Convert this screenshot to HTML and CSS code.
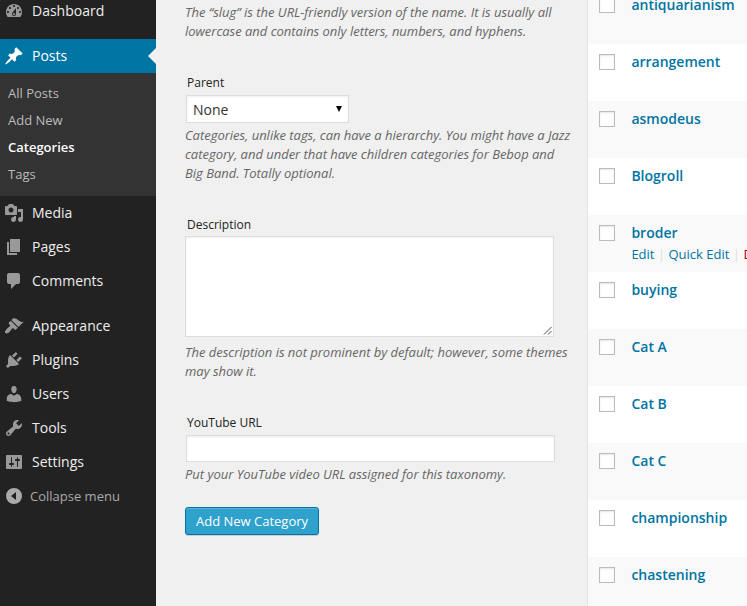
FILE: index.html
```html
<!DOCTYPE html>
<html lang="en">
<head>
<meta charset="utf-8">
<title>Categories</title>
<link rel="stylesheet" href="styles.css">
</head>
<body>
<div class="admin">
  <nav class="sidebar">
    <a class="item"><svg class="icon" viewBox="0 0 20 20"><path d="M3.76 16h12.48c1.1-1.37 1.76-3.11 1.76-5 0-4.42-3.58-8-8-8s-8 3.58-8 8c0 1.89.66 3.63 1.76 5zM10 4c.55 0 1 .45 1 1s-.45 1-1 1-1-.45-1-1 .45-1 1-1zM6 6c.55 0 1 .45 1 1s-.45 1-1 1-1-.45-1-1 .45-1 1-1zm8 0c.55 0 1 .45 1 1s-.45 1-1 1-1-.45-1-1 .45-1 1-1zm-5.37 5.55L12 7v6c0 1.1-.9 2-2 2s-2-.9-2-2c0-.57.24-1.08.63-1.45zM4 10c.55 0 1 .45 1 1s-.45 1-1 1-1-.45-1-1 .45-1 1-1zm12 0c.55 0 1 .45 1 1s-.45 1-1 1-1-.45-1-1 .45-1 1-1zm-5 3c0-.55-.45-1-1-1s-1 .45-1 1 .45 1 1 1 1-.45 1-1z"/></svg><span>Dashboard</span></a>
    <a class="item current"><svg class="icon" viewBox="0 0 20 20"><path d="M10.44 3.02l1.82-1.82 6.36 6.35-1.83 1.82c-1.05-.68-2.48-.57-3.41.36l-.75.75c-.92.93-1.04 2.35-.35 3.41l-1.83 1.82-2.41-2.41-2.8 2.79c-.42.42-3.38 2.71-3.8 2.29s1.86-3.39 2.28-3.81l2.79-2.79L4.1 9.36l1.83-1.82c1.05.69 2.48.57 3.4-.36l.75-.75c.93-.92 1.05-2.35.36-3.41z"/></svg><span>Posts</span></a>
    <div class="submenu">
      <a>All Posts</a>
      <a>Add New</a>
      <a class="active">Categories</a>
      <a>Tags</a>
    </div>
    <a class="item"><svg class="icon" viewBox="0 0 20 20"><path d="M13 11V4c0-.55-.45-1-1-1h-1.67L9 1H5L3.67 3H2c-.55 0-1 .45-1 1v7c0 .55.45 1 1 1h10c.55 0 1-.45 1-1zM7 4.5c1.38 0 2.5 1.12 2.5 2.5S8.38 9.5 7 9.5 4.5 8.38 4.5 7 5.62 4.5 7 4.5zM14 6h5v10.5c0 1.38-1.12 2.5-2.5 2.5S14 17.88 14 16.5s1.12-2.5 2.5-2.5c.17 0 .34.02.5.05V9h-3V6zm-4 8.05V13h2v3.5c0 1.38-1.12 2.5-2.5 2.5S7 17.88 7 16.5 8.12 14 9.5 14c.17 0 .34.02.5.05z"/></svg><span>Media</span></a>
    <a class="item"><svg class="icon" viewBox="0 0 20 20"><path d="M6 15V2h10v13H6zm-1 1h8v2H3V5h2v11z"/></svg><span>Pages</span></a>
    <a class="item"><svg class="icon" viewBox="0 0 20 20"><path d="M5 2h9c1.1 0 2 .9 2 2v7c0 1.1-.9 2-2 2h-2l-5 5v-5H5c-1.1 0-2-.9-2-2V4c0-1.1.9-2 2-2z"/></svg><span>Comments</span></a>
    <a class="item spaced"><svg class="icon" viewBox="0 0 20 20"><path d="M14.48 11.06L7.41 3.99l1.5-1.5c.5-.56 2.3-.47 3.51.32 1.21.8 1.43 1.28 2.91 2.1 1.18.64 2.45 1.26 4.45.85zm-.71.71L6.7 4.7 4.93 6.47c-.39.39-.39 1.02 0 1.41l1.06 1.06c.39.39.39 1.03 0 1.42-.6.6-1.43 1.11-2.21 1.69-.35.26-.7.53-1.01.84C1.43 14.23.4 16.08 1.4 17.07c.99 1 2.84-.03 4.18-1.36.31-.31.58-.66.85-1.02.57-.78 1.08-1.61 1.69-2.21.39-.39 1.02-.39 1.41 0l1.06 1.06c.39.39 1.02.39 1.41 0z"/></svg><span>Appearance</span></a>
    <a class="item"><svg class="icon" viewBox="0 0 20 20"><path d="M13.11 4.36L9.87 7.6 8 5.73l3.24-3.24c.35-.34 1.05-.2 1.56.32.52.51.66 1.21.31 1.55zm-8 1.77l.91-1.12 9.01 9.01-1.19.84c-.71.71-2.63 1.16-3.82 1.16H6.14L4.9 17.26c-.59.59-1.54.59-2.12 0-.59-.58-.59-1.53 0-2.12l1.24-1.24v-3.88c0-1.13.4-3.19 1.09-3.89zm7.26 3.97l3.24-3.24c.34-.35 1.04-.21 1.55.31.52.51.66 1.21.31 1.55l-3.24 3.25z"/></svg><span>Plugins</span></a>
    <a class="item"><svg class="icon" viewBox="0 0 20 20"><path d="M10 9.25c-2.27 0-2.73-3.44-2.73-3.44C7 4.02 7.82 2 9.97 2c2.16 0 2.98 2.02 2.71 3.81 0 0-.41 3.44-2.68 3.44zm0 2.57L12.72 10c2.39 0 4.52 2.33 4.52 4.53v2.49s-3.65 1.13-7.24 1.13c-3.65 0-7.24-1.13-7.24-1.13v-2.49c0-2.25 1.94-4.48 4.47-4.48z"/></svg><span>Users</span></a>
    <a class="item"><svg class="icon" viewBox="0 0 20 20"><path d="M16.68 9.77c-1.34 1.34-3.3 1.67-4.95.99l-5.41 6.52c-.99.99-2.59.99-3.58 0s-.99-2.59 0-3.57l6.52-5.42c-.68-1.65-.35-3.61.99-4.95 1.28-1.28 3.12-1.62 4.72-1.06l-2.89 2.89 2.82 2.82 2.86-2.87c.53 1.58.18 3.39-1.08 4.65zM3.81 16.21c.4.39 1.04.39 1.43 0 .4-.4.4-1.04 0-1.43-.39-.4-1.03-.4-1.43 0-.39.39-.39 1.03 0 1.43z"/></svg><span>Tools</span></a>
    <a class="item"><svg class="icon" viewBox="0 0 20 20"><path d="M18 16V4c0-.55-.45-1-1-1H3c-.55 0-1 .45-1 1v12c0 .55.45 1 1 1h14c.55 0 1-.45 1-1zM8 11h1c.55 0 1 .45 1 1s-.45 1-1 1H8v1.500c0 .28-.22.5-.5.5s-.5-.22-.5-.5V13H6c-.55 0-1-.45-1-1s.45-1 1-1h1V5.500c0-.28.22-.5.5-.5s.5.22.5.5V11zm5-2h-1c-.55 0-1-.45-1-1s.45-1 1-1h1V5.500c0-.28.22-.5.5-.5s.5.22.5.5V7h1c.55 0 1 .45 1 1s-.45 1-1 1h-1v5.500c0 .28-.22.5-.5.5s-.5-.22-.5-.5V9z"/></svg><span>Settings</span></a>
    <a class="item collapse"><svg class="icon" viewBox="0 0 20 20"><path fill-rule="evenodd" d="M10 2a8 8 0 1 1 0 16 8 8 0 0 1 0-16zM12 6v8l-5-4z"/></svg><span>Collapse menu</span></a>
  </nav>

  <main class="form">
    <p class="help">The “slug” is the URL-friendly version of the name. It is usually all<br>lowercase and contains only letters, numbers, and hyphens.</p>

    <div class="field parent">
      <label>Parent</label>
      <div class="select"><span>None</span><i class="caret"></i></div>
      <p class="help">Categories, unlike tags, can have a hierarchy. You might have a Jazz<br>category, and under that have children categories for Bebop and<br>Big Band. Totally optional.</p>
    </div>

    <div class="field description">
      <label>Description</label>
      <div class="textarea"><svg class="grip" viewBox="0 0 9 9"><path d="M1 8.500L8.500 1M5 8.500L8.500 5"/></svg></div>
      <p class="help">The description is not prominent by default; however, some themes<br>may show it.</p>
    </div>

    <div class="field youtube">
      <label>YouTube URL</label>
      <div class="input"></div>
      <p class="help">Put your YouTube video URL assigned for this taxonomy.</p>
    </div>

    <button class="submit" type="button">Add New Category</button>
  </main>

  <section class="list">
    <div class="row"><i class="check"></i><a class="name">antiquarianism</a></div>
    <div class="row"><i class="check"></i><a class="name">arrangement</a></div>
    <div class="row"><i class="check"></i><a class="name">asmodeus</a></div>
    <div class="row"><i class="check"></i><a class="name">Blogroll</a></div>
    <div class="row"><i class="check"></i><div><a class="name">broder</a><div class="actions"><a>Edit</a><i>|</i><a>Quick Edit</a><i>|</i><a class="delete">Delete</a></div></div></div>
    <div class="row"><i class="check"></i><a class="name">buying</a></div>
    <div class="row"><i class="check"></i><a class="name">Cat A</a></div>
    <div class="row"><i class="check"></i><a class="name">Cat B</a></div>
    <div class="row"><i class="check"></i><a class="name">Cat C</a></div>
    <div class="row"><i class="check"></i><a class="name">championship</a></div>
    <div class="row"><i class="check"></i><a class="name">chastening</a></div>
  </section>
</div>
</body>
</html>
```
FILE: styles.css
```css
* { box-sizing: border-box; }

body {
  margin: 0;
  height: 606px;
  overflow: hidden;
  background: #f1f1f1;
  color: #222;
  font: 13px/19px "Open Sans", sans-serif;
}

.admin { display: flex; height: 606px; overflow: hidden; }

.sidebar {
  flex: none;
  width: 156px;
  height: 612px;
  margin-top: -6px;
  background: #222;
}

.item {
  position: relative;
  display: flex;
  align-items: center;
  height: 34px;
  padding-left: 4px;
  color: #eee;
  font-size: 14px;
}
.item span { padding-bottom: 2px; }
.icon { width: 20px; height: 20px; margin-right: 8px; fill: #999; }

.current { margin-top: 11px; background: #0074a2; color: #fff; }
.current .icon { fill: #fff; }
.current::after {
  content: "";
  position: absolute;
  right: 0;
  top: 9px;
  border: 8px solid transparent;
  border-left: 0;
  border-right-color: #f1f1f1;
}
.spaced { margin-top: 11px; }
.collapse { color: #aaa; font-size: 13px; }
.collapse span { padding-bottom: 0; }
.collapse .icon { margin-right: 6px; fill: #aaa; }

.submenu { height: 123px; padding: 7px 8px 8px; background: #333; }
.submenu a { display: block; height: 27px; line-height: 27px; color: #bbb; }
.submenu .active { color: #fff; font-weight: 600; }

.form {
  flex: none;
  width: 419px;
  margin-left: 12px;
  padding: 3px 0 0 17px;
  background: #f0f0f0;
}
.help {
  margin: 0;
  color: #666;
  font-style: italic;
  letter-spacing: -.02px;
  white-space: nowrap;
}

.field label { display: block; margin-left: 2px; font-size: 12px; line-height: 19px; }
.parent { margin-top: 32px; }
.description { margin-top: 32px; }
.youtube { margin-top: 32px; }

.select, .input, .textarea {
  border: 1px solid #ddd;
  background: #fff;
  box-shadow: inset 0 1px 2px rgba(0, 0, 0, .07);
}
.select {
  display: flex;
  align-items: center;
  justify-content: space-between;
  width: 163px;
  height: 28px;
  margin: 3px 0 3px 1px;
  padding: 0 6px 0 6px;
  color: #333;
  font-size: 14px;
}
.caret { border: 3px solid transparent; border-top: 6px solid #000; border-bottom: 0; }
.textarea {
  display: flex;
  align-items: flex-end;
  justify-content: flex-end;
  width: 369px;
  height: 101px;
  margin: 2px 0 6px;
  padding: 0 1px 1px 0;
}
.grip { width: 9px; height: 9px; fill: none; stroke: #444; }
.input { width: 369px; height: 27px; margin: 3px 0 3px 1px; }

.submit {
  display: block;
  width: 134px;
  height: 28px;
  margin-top: 23px;
  padding: 0;
  border: 1px solid #0074a2;
  border-radius: 3px;
  background: #2ea2cc;
  color: #fff;
  font: 13px/26px "Open Sans", sans-serif;
  box-shadow: inset 0 1px 0 rgba(120, 200, 230, .5), 0 1px 0 rgba(0, 0, 0, .15);
}

.list { flex: none; width: 180px; margin-top: -13px; border-left: 1px solid #e5e5e5; }
.row {
  display: flex;
  align-items: flex-start;
  height: 57px;
  padding: 8px 0 0 11px;
  background: #fff;
}
.row:nth-child(odd) { background: #f9f9f9; }
.check {
  flex: none;
  width: 16px;
  height: 16px;
  margin: 2px 16.4px 0 0;
  border: 1px solid #bbb;
  background: #fff;
  box-shadow: inset 0 1px 2px rgba(0, 0, 0, .1);
}
.name { display: block; color: #0074a2; font-size: 14px; font-weight: 600; line-height: 20px; }
.actions { display: flex; margin-top: 2px; color: #0074a2; white-space: nowrap; }
.actions i { width: 14px; color: #ddd; font-style: normal; text-align: center; }
.actions .delete { color: #a00; }
```
